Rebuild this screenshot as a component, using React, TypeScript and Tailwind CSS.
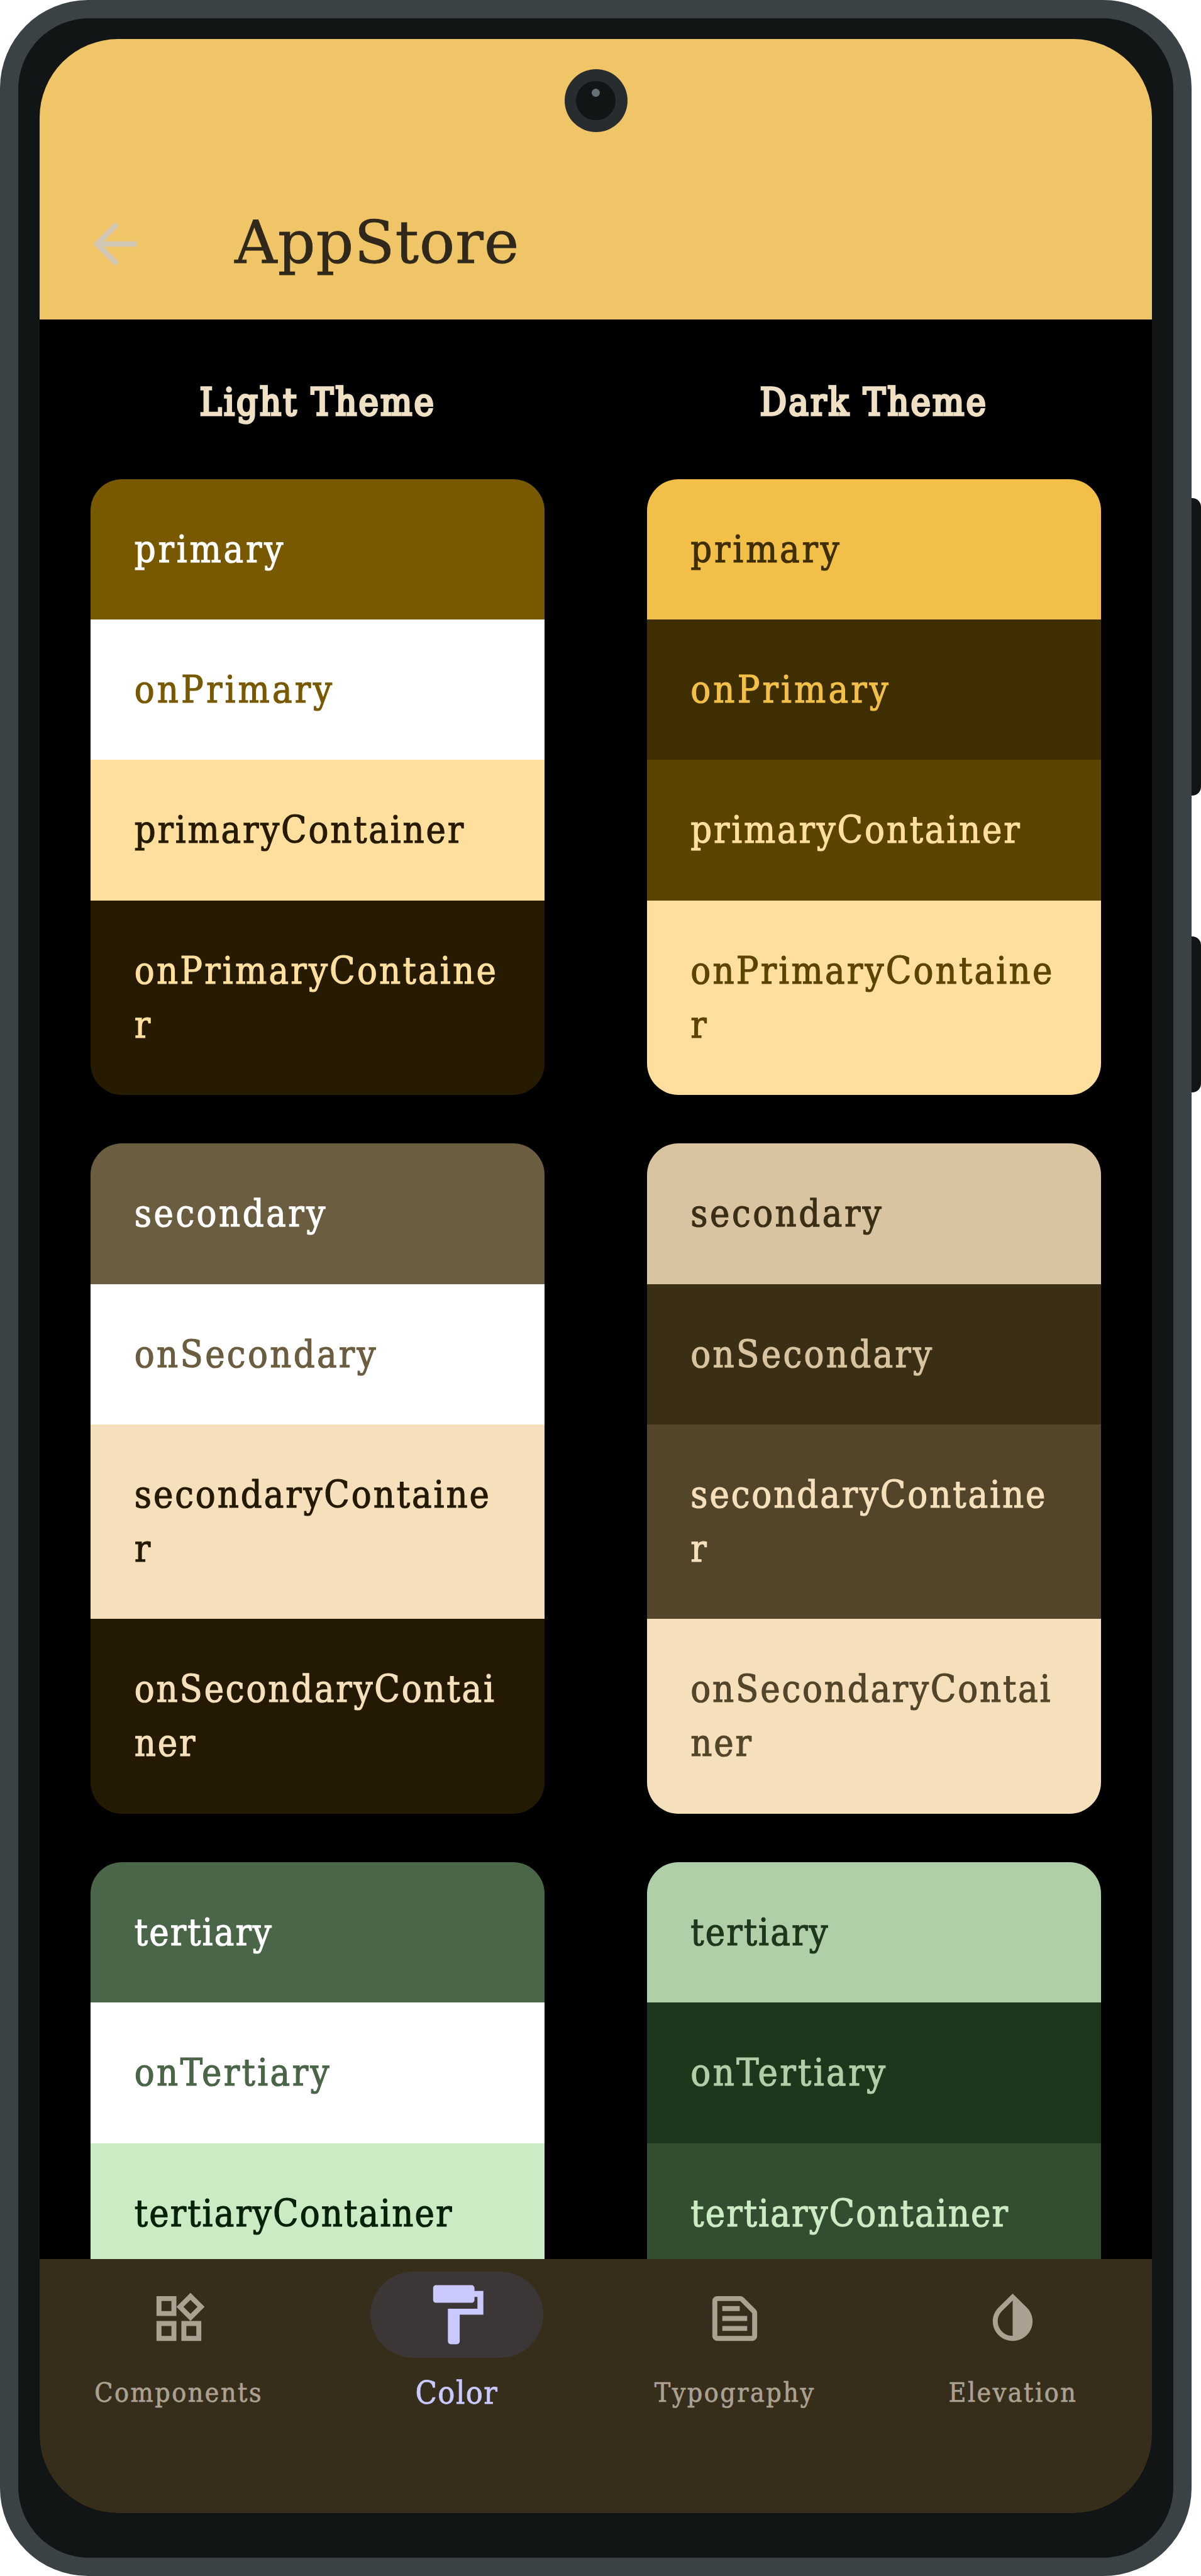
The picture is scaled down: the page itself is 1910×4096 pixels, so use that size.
type Swatch = { label: string; colors: string };

const lightGroups: Swatch[][] = [
  [
    { label: 'primary', colors: 'bg-[#785900] text-white' },
    { label: 'onPrimary', colors: 'bg-white text-[#785900]' },
    { label: 'primaryContainer', colors: 'bg-[#ffdf9e] text-[#261a00]' },
    { label: 'onPrimaryContaine\nr', colors: 'bg-[#261a00] text-[#ffdf9e]' },
  ],
  [
    { label: 'secondary', colors: 'bg-[#6b5d3f] text-white' },
    { label: 'onSecondary', colors: 'bg-white text-[#6b5d3f]' },
    { label: 'secondaryContaine\nr', colors: 'bg-[#f5e0bb] text-[#241a04]' },
    { label: 'onSecondaryContai\nner', colors: 'bg-[#241a04] text-[#f5e0bb]' },
  ],
  [
    { label: 'tertiary', colors: 'bg-[#4a6547] text-white' },
    { label: 'onTertiary', colors: 'bg-white text-[#4a6547]' },
    { label: 'tertiaryContainer', colors: 'bg-[#ccebc4] text-[#072109]' },
  ],
];

const darkGroups: Swatch[][] = [
  [
    { label: 'primary', colors: 'bg-[#f2bf48] text-[#3f2e00]' },
    { label: 'onPrimary', colors: 'bg-[#3f2e00] text-[#f2bf48]' },
    { label: 'primaryContainer', colors: 'bg-[#5b4300] text-[#ffdf9e]' },
    { label: 'onPrimaryContaine\nr', colors: 'bg-[#ffdf9e] text-[#5b4300]' },
  ],
  [
    { label: 'secondary', colors: 'bg-[#d8c4a0] text-[#3a2f15]' },
    { label: 'onSecondary', colors: 'bg-[#3a2f15] text-[#d8c4a0]' },
    { label: 'secondaryContaine\nr', colors: 'bg-[#52452a] text-[#f5e0bb]' },
    { label: 'onSecondaryContai\nner', colors: 'bg-[#f5e0bb] text-[#52452a]' },
  ],
  [
    { label: 'tertiary', colors: 'bg-[#b0cfa9] text-[#1d361c]' },
    { label: 'onTertiary', colors: 'bg-[#1d361c] text-[#b0cfa9]' },
    { label: 'tertiaryContainer', colors: 'bg-[#334d31] text-[#ccebc4]' },
  ],
];

const labelTracking: Record<string, string> = {
  primary: 'tracking-[3.8px]',
  onPrimary: 'tracking-[4.1px]',
  primaryContainer: 'tracking-[2.8px]',
  'onPrimaryContaine\nr': 'tracking-[3.2px]',
  secondary: 'tracking-[3.5px]',
  onSecondary: 'tracking-[3.3px]',
  'secondaryContaine\nr': 'tracking-[2.9px]',
  'onSecondaryContai\nner': 'tracking-[2.8px]',
  tertiary: 'tracking-[2.1px]',
  onTertiary: 'tracking-[3.4px]',
  tertiaryContainer: 'tracking-[2.1px]',
};

const icons = {
  back: 'M20 11H7.83l5.59-5.59L12 4l-8 8 8 8 1.41-1.41L7.83 13H20v-2z',
  widgets:
    'M16.66 4.52l2.83 2.83-2.83 2.83-2.83-2.83 2.83-2.83M9 5v4H5V5h4m10 10v4h-4v-4h4M9 15v4H5v-4h4m7.66-13.31L11 7.34 16.66 13l5.66-5.66-5.66-5.65zM11 3H3v8h8V3zm10 10h-8v8h8v-8zm-10 0H3v8h8v-8z',
  paint:
    'M18 4V3c0-.55-.45-1-1-1H5c-.55 0-1 .45-1 1v4c0 .55.45 1 1 1h12c.55 0 1-.45 1-1V6h1v4H9v11c0 .55.45 1 1 1h2c.55 0 1-.45 1-1v-9h8V4h-3z',
  snippet:
    'M20.41 8.41l-4.83-4.83c-.37-.37-.88-.58-1.41-.58H5c-1.1 0-2 .9-2 2v14c0 1.1.9 2 2 2h14c1.1 0 2-.9 2-2V9.83c0-.53-.21-1.04-.59-1.42zM5 19V5h9.17L19 9.83V19H5zM7 7h7v2H7zM7 11h10v2H7zM7 15h10v2H7z',
  drop: 'M12 4.81V19c-3.31 0-6-2.63-6-5.87 0-1.56.62-3.03 1.75-4.14L12 4.81M12 2L6.35 7.56C4.9 8.99 4 10.96 4 13.13 4 17.48 7.58 21 12 21s8-3.52 8-7.87c0-2.17-.9-4.14-2.35-5.56L12 2z',
};

function Icon({ d, className }: { d: string; className: string }) {
  return (
    <svg viewBox="0 0 24 24" className={`shrink-0 ${className}`}>
      <path d={d} fill="currentColor" fillRule="evenodd" />
    </svg>
  );
}

function ThemeColumn({ title, groups }: { title: string; groups: Swatch[][] }) {
  return (
    <section className="flex flex-1 flex-col px-[81.4px] pt-[88.5px]">
      <h2 className="mb-[78.8px] h-[86px] text-center text-[59px] leading-[86px] tracking-[3.1px] whitespace-nowrap text-[#efe0c4] [-webkit-text-stroke:3.4px_#efe0c4]">
        {title}
      </h2>
      <div className="flex flex-col gap-[77.4px]">
        {groups.map((group) => (
          <div
            key={group[0].label}
            className="flex flex-col overflow-hidden rounded-[50px] last:rounded-b-none"
          >
            {group.map(({ label, colors }) => (
              <div
                key={label}
                className={`pt-[69px] pb-[68.3px] pl-[69.4px] text-[59px] leading-[86px] whitespace-pre [-webkit-text-stroke:1.2px] ${labelTracking[label]} ${colors}`}
              >
                {label}
              </div>
            ))}
          </div>
        ))}
      </div>
    </section>
  );
}

function NavItem({ icon, label }: { icon: string; label: string }) {
  return (
    <div className="flex flex-1 flex-col items-center pt-[47px] text-[#aba193]">
      <Icon d={icon} className="size-[95px]" />
      <span className="mt-[40.5px] text-[42.5px] leading-[60px] tracking-[2.5px] [-webkit-text-stroke:0.7px]">
        {label}
      </span>
    </div>
  );
}

export default function App() {
  return (
    <div className="flex h-[4096px] w-[1910px] bg-white font-['DejaVu_Serif_Condensed','DejaVu_Serif',serif]">
      <div className="relative h-full w-[1895px] rounded-[140px] bg-[#3b4245] p-[28.7px]">
        <div className="h-full rounded-[113px] bg-[#111515] px-[34.3px] pt-[33.5px] pb-[71.4px]">
          <div className="flex h-full flex-col overflow-hidden rounded-[125px] bg-black">
            <header className="flex h-[446.3px] shrink-0 items-start bg-[#efc568] pt-[274px] pl-[68.3px]">
              <div className="flex items-center gap-[138px]">
                <Icon d={icons.back} className="size-[104px] text-[#d1c5b4]" />
                <h1 className="mb-[4px] font-['DejaVu_Serif',serif] text-[93.3px] leading-[100px] tracking-[1.1px] text-[#2f281b] [-webkit-text-stroke:0.8px]">
                  AppStore
                </h1>
              </div>
            </header>
            <main className="flex min-h-0 flex-1 overflow-hidden">
              <ThemeColumn title="Light Theme" groups={lightGroups} />
              <ThemeColumn title="Dark Theme" groups={darkGroups} />
            </main>
            <nav className="flex h-[403.6px] shrink-0 bg-[#362d1a]">
              <NavItem icon={icons.widgets} label="Components" />
              <div className="flex flex-1 flex-col items-center pt-[19.2px] text-[#c9c9fd]">
                <div className="flex h-[137.5px] w-[275px] items-center justify-center rounded-full bg-[#3d3636]">
                  <Icon d={icons.paint} className="size-[112.8px]" />
                </div>
                <span className="mt-[26.4px] text-[50px] leading-[60px] tracking-[1.5px] [-webkit-text-stroke:0.8px]">
                  Color
                </span>
              </div>
              <NavItem icon={icons.snippet} label="Typography" />
              <NavItem icon={icons.drop} label="Elevation" />
            </nav>
          </div>
        </div>
        {/* Front camera */}
        <div className="absolute top-[110px] left-[897.5px] flex size-[100px] items-center justify-center rounded-full bg-[#272c2e]">
          <div className="flex size-[62.4px] justify-center rounded-full bg-[#111515] pt-[12.4px]">
            <div className="size-[12.8px] rounded-full bg-[#677175]" />
          </div>
        </div>
      </div>
      {/* Volume and power keys */}
      <div className="flex flex-1 flex-col pt-[792px]">
        <div className="h-[473px] rounded-r-[14px] bg-[#111515]" />
        <div className="mt-[224px] h-[248px] rounded-r-[14px] bg-[#111515]" />
      </div>
    </div>
  );
}
